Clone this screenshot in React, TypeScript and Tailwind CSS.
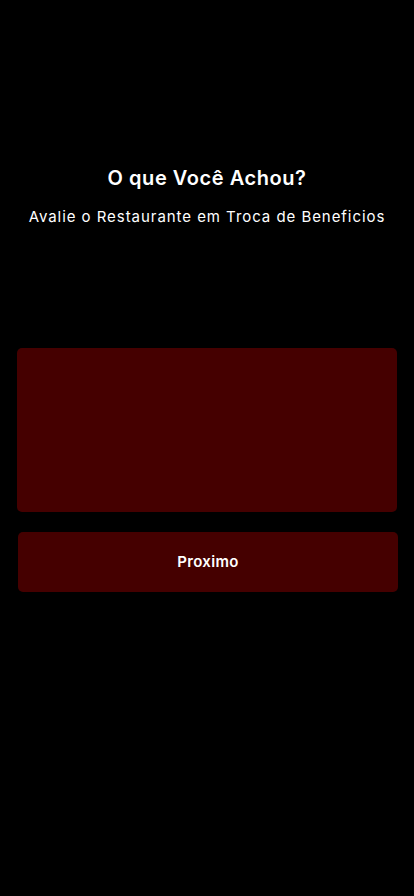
export default function App() {
  return (
    <div className="min-h-[896px] w-full bg-black flex flex-col items-center" style={{ fontFamily: "Inter, 'Noto Sans', sans-serif" }}>
      <h1 className="mt-[165px] text-white text-[20px] leading-[26px] font-semibold tracking-[0.55px]">O que Você Achou?</h1>
      <p className="mt-[16px] text-white text-[15px] leading-[20px] tracking-[0.95px]">Avalie o Restaurante em Troca de Beneficios</p>
      <div className="mt-[121px] w-[380px] h-[164px] rounded-[5px] bg-[#450000]" />
      <button className="mt-[20px] ml-[2px] w-[380px] h-[60px] rounded-[5px] bg-[#450000] text-white text-[15px] font-semibold tracking-[0.3px]">Proximo</button>
    </div>
  );
}
